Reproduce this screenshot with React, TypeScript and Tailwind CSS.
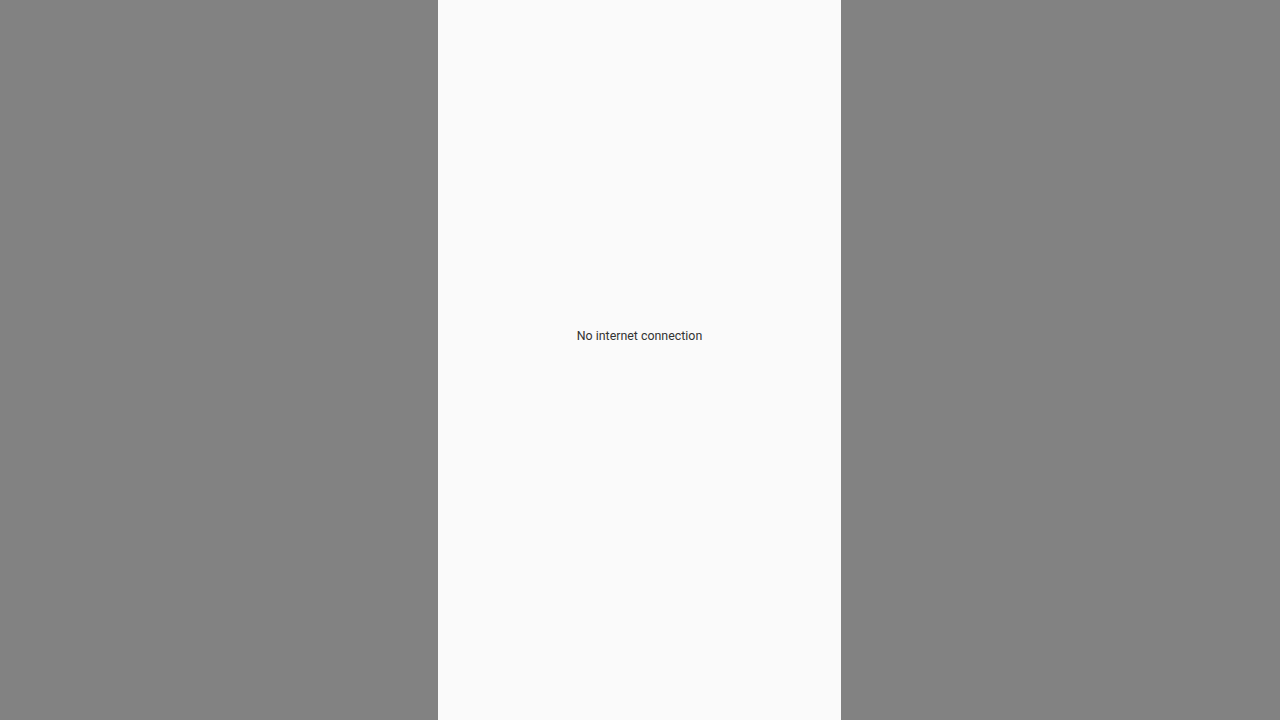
export default function App() {
  return (
    <div className="flex h-[720px] w-full bg-[#828282]">
      <div className="ml-[438px] flex h-full w-[403px] items-center justify-center bg-[#fafafa] pb-[48px]">
        <p className="text-[12.4px] leading-4 text-[#333333] font-['Roboto',sans-serif]">No internet connection</p>
      </div>
    </div>
  )
}
